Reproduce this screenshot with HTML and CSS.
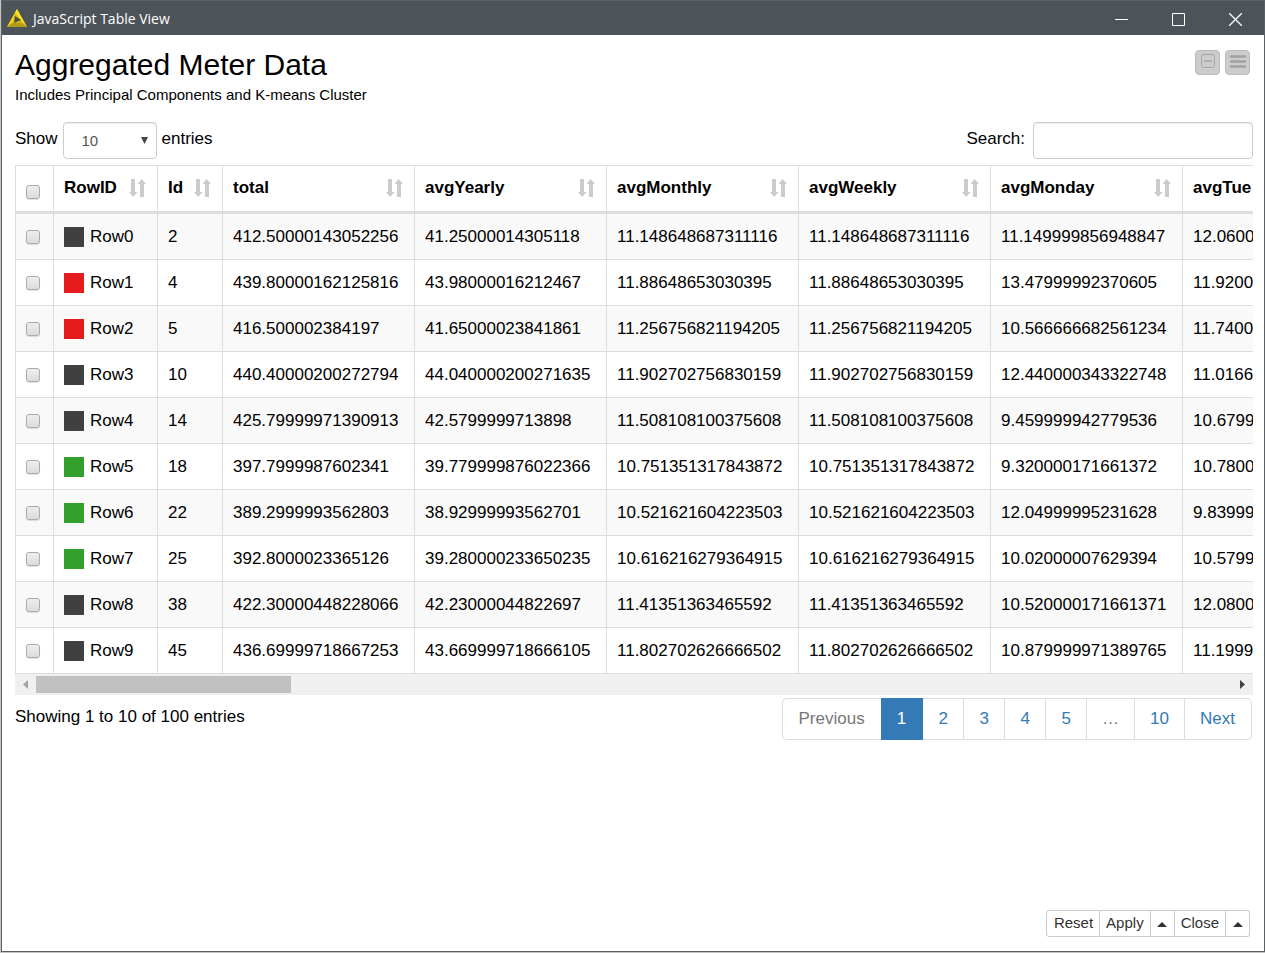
FILE: index.html
```html
<!DOCTYPE html>
<html lang="en">
<head>
<meta charset="utf-8">
<title>JavaScript Table View</title>
<link rel="stylesheet" href="styles.css">
</head>
<body>
<div class="window">
  <header class="titlebar">
    <svg class="app-icon" width="20" height="18" viewBox="0 0 20 18" aria-hidden="true">
      <path d="M10 0L20 18H0Z" fill="#d8bb12"/>
      <path d="M10 0L20 18L14 11L8 3.5Z" fill="#fbe420"/>
      <path d="M8 3.5L7 9L6 14L0 18Z" fill="#f0d41c"/>
      <path d="M0 18L5 14H14L20 18Z" fill="#b39a18"/>
      <path d="M8 7L14 11L7 14Z" fill="#4c5040"/>
    </svg>
    <span class="titlebar-text">JavaScript Table View</span>
    <div class="window-buttons">
      <button class="window-button" aria-label="Minimize"><svg width="13" height="13" viewBox="0 0 13 13"><path d="M0 6.5H13"/></svg></button>
      <button class="window-button" aria-label="Maximize"><svg width="13" height="13" viewBox="0 0 13 13"><path d="M.5 .5H12.5V12.5H.5Z"/></svg></button>
      <button class="window-button" aria-label="Close window"><svg width="13" height="13" viewBox="0 0 13 13"><path d="M0 0L13 13M13 0L0 13" stroke-width="1.3"/></svg></button>
    </div>
  </header>
  <main class="view">
    <div class="heading">
      <div>
        <h1 class="title">Aggregated Meter Data</h1>
        <p class="subtitle">Includes Principal Components and K-means Cluster</p>
      </div>
      <div class="tools">
        <button class="tool" aria-label="Collapse"><svg width="23" height="23" viewBox="0 0 23 23" fill="none" stroke="#a5a5a5"><rect x="5.5" y="3.5" width="13" height="13" rx="2"/><path d="M8 10H16" stroke-width="1.5"/></svg></button>
        <button class="tool" aria-label="Menu"><svg width="23" height="23" viewBox="0 0 23 23" stroke="#a1a1a1" stroke-width="2.6" stroke-linecap="round"><path d="M5 5.5H19M5 10.5H19M5 15.5H19"/></svg></button>
      </div>
    </div>
    <div class="filters">
      <label class="length">Show
        <span class="select-wrap"><select class="field length-select"><option>10</option></select><svg class="select-arrow" width="7" height="7" viewBox="0 0 7 7"><path d="M0 0H7L3.5 7Z" fill="#444"/></svg></span>
        entries</label>
      <label class="search">Search: <input class="field search-input" type="search"></label>
    </div>
    <div class="table-scroll">
      <table class="data">
        <colgroup><col class="col-check"><col class="col-row"><col class="col-id"><col class="col-value" span="6"></colgroup>
        <thead><tr id="columns"><th class="check-head"><input class="check" type="checkbox" aria-label="Select all rows"></th></tr></thead>
        <tbody id="rows"></tbody>
      </table>
    </div>
    <div class="scrollbar">
      <button class="scroll-button" aria-label="Scroll left"><svg width="5" height="9" viewBox="0 0 5 9"><path d="M5 0V9L0 4.5Z" fill="#a3a3a3"/></svg></button>
      <div class="track"><div class="thumb"></div></div>
      <button class="scroll-button" aria-label="Scroll right"><svg width="5" height="9" viewBox="0 0 5 9"><path d="M0 0V9L5 4.5Z" fill="#444"/></svg></button>
    </div>
    <div class="summary">
      <div class="info">Showing 1 to 10 of 100 entries</div>
      <nav class="pages" aria-label="Pages">
        <a class="page muted">Previous</a><a class="page active" href="#">1</a><a class="page" href="#">2</a><a class="page" href="#">3</a><a class="page" href="#">4</a><a class="page" href="#">5</a><a class="page muted">…</a><a class="page" href="#">10</a><a class="page" href="#">Next</a>
      </nav>
    </div>
    <footer class="actions">
      <button class="action">Reset</button><button class="action">Apply</button><button class="action caret" aria-label="Apply options"><svg width="10" height="5" viewBox="0 0 10 5"><path d="M0 5L5 0L10 5Z" fill="#333"/></svg></button><button class="action">Close</button><button class="action caret" aria-label="Close options"><svg width="10" height="5" viewBox="0 0 10 5"><path d="M0 5L5 0L10 5Z" fill="#333"/></svg></button>
    </footer>
  </main>
</div>
<script src="table.js"></script>
</body>
</html>
```

FILE: styles.css
```css
* { box-sizing: border-box; }

body {
  margin: 0;
  background: #c4c4c4;
  color: #000;
  font: 17px/24px "Liberation Sans", Arial, sans-serif;
}

button, input, select { font: inherit; margin: 0; }

.window {
  display: flex;
  flex-direction: column;
  min-height: calc(100vh - 1px);
  margin: 0 0 1px 1px;
  border: 1px solid #5a6063;
  border-top-color: #596268;
  background: #fff;
}

.titlebar {
  display: flex;
  align-items: center;
  height: 34px;
  padding-left: 5px;
  gap: 6px;
  background: #4c5359;
  color: #fff;
}

.titlebar-text {
  padding-top: 2px;
  font: 14px/20px "Open Sans", "Noto Sans", sans-serif;
}

.window-buttons { display: flex; margin-left: auto; }

.window-button {
  display: flex;
  align-items: center;
  justify-content: center;
  width: 57px;
  height: 34px;
  padding: 2px 0 0;
  border: 0;
  background: none;
}

.window-button path { fill: none; stroke: #fff; }

.view {
  display: flex;
  flex: 1;
  flex-direction: column;
  padding: 10px 11px 14px 13px;
}

.heading { display: flex; justify-content: space-between; height: 77px; }

.title { margin: 0; font-size: 30px; font-weight: 400; line-height: 40px; }

.subtitle { margin: 0; font-size: 15px; line-height: 20px; }

.tools { display: flex; gap: 5px; padding: 5px 3px 0 0; }

.tool {
  width: 25px;
  height: 25px;
  padding: 0;
  border: 1px solid #bbb;
  border-radius: 4px;
  background: #ccc;
}

.tool svg { display: block; }

.filters { display: flex; justify-content: space-between; height: 43px; }

.length, .search { display: flex; gap: 5px; line-height: 34px; }

.search { gap: 8px; }

.field {
  height: 37px;
  border: 1px solid #ccc;
  border-radius: 4px;
  background: #fff;
  box-shadow: inset 0 1px 1px rgba(0, 0, 0, .07);
  color: #555;
  font-size: 15px;
}

.select-wrap { display: flex; position: relative; }

.length-select { appearance: none; width: 94px; padding: 0 18px; }

.select-arrow { position: absolute; right: 9px; top: 15px; }

.search-input { width: 220px; padding: 6px 12px; }

.table-scroll { overflow: hidden; }

.data {
  width: 1360px;
  border-top: 1px solid #ddd;
  border-left: 1px solid #ddd;
  border-spacing: 0;
  table-layout: fixed;
}

.col-check { width: 38px; }
.col-row { width: 104px; }
.col-id { width: 65px; }
.col-value { width: 192px; }

.data th, .data td {
  height: 46px;
  padding: 0 10px;
  border-right: 1px solid #ddd;
  border-bottom: 1px solid #ddd;
  text-align: left;
  white-space: nowrap;
}

.data th {
  height: 48px;
  padding-bottom: 2px;
  border-bottom-width: 3px;
}

.data tbody tr:nth-child(odd) { background: #f9f9f9; }

.column { display: flex; align-items: center; justify-content: space-between; }

.row-id { display: flex; align-items: center; gap: 6px; }

.swatch { width: 20px; height: 20px; }
.dark { background: #404040; }
.red { background: #e41a1c; }
.green { background: #33a02c; }

.check {
  appearance: none;
  display: block;
  width: 14px;
  height: 14px;
  border: 1px solid #aaa;
  border-radius: 3px;
  background: linear-gradient(#eee, #dcdcdc);
  box-shadow: 0 1px 1px rgba(0, 0, 0, .12);
}

.data .check-head { padding-top: 9px; }

.scrollbar { display: flex; height: 21px; padding: 2px 0; background: #f0f0f0; }

.scroll-button {
  display: flex;
  align-items: center;
  justify-content: center;
  width: 21px;
  padding: 0;
  border: 0;
  background: none;
}

.track { flex: 1; }

.thumb { width: 255px; height: 17px; background: #c1c1c1; }

.summary { display: flex; justify-content: space-between; margin-top: 3px; }

.info { padding-top: 7px; }

.pages { display: flex; margin-right: 1px; }

.page {
  min-width: 41px;
  padding: 8px 15px;
  border: 1px solid #ddd;
  border-left-width: 0;
  color: #337ab7;
  text-align: center;
  text-decoration: none;
}

.page:first-child {
  padding: 8px 16px;
  border-left-width: 1px;
  border-right-width: 0;
  border-radius: 5px 0 0 5px;
}

.page:last-child { padding: 8px 16px 8px 15px; border-radius: 0 5px 5px 0; }
.muted { color: #777; }
.active { padding: 8px 16px; border-color: #337ab7; background: #337ab7; color: #fff; }

.actions { display: flex; justify-content: flex-end; margin: auto 3px 0 0; }

.action {
  height: 27px;
  padding: 0 6px 2px;
  border: 1px solid #ccc;
  border-left-width: 0;
  background: #fff;
  color: #333;
  font-size: 15px;
  line-height: 23px;
}

.action:first-child { padding-left: 7px; border-left-width: 1px; border-radius: 3px 0 0 3px; }
.action:last-child { border-radius: 0 3px 3px 0; }

.caret {
  display: flex;
  align-items: center;
  justify-content: center;
  width: 24px;
  padding-top: 4px;
}
```

FILE: table.js
```javascript
const columns = ["RowID", "Id", "total", "avgYearly", "avgMonthly", "avgWeekly", "avgMonday", "avgTue"];

const rows = [
  ["dark", "2", "412.50000143052256", "41.25000014305118", "11.148648687311116", "11.148648687311116", "11.149999856948847", "12.0600"],
  ["red", "4", "439.80000162125816", "43.98000016212467", "11.88648653030395", "11.88648653030395", "13.47999992370605", "11.9200"],
  ["red", "5", "416.500002384197", "41.65000023841861", "11.256756821194205", "11.256756821194205", "10.566666682561234", "11.7400"],
  ["dark", "10", "440.40000200272794", "44.040000200271635", "11.902702756830159", "11.902702756830159", "12.440000343322748", "11.0166"],
  ["dark", "14", "425.79999971390913", "42.5799999713898", "11.508108100375608", "11.508108100375608", "9.459999942779536", "10.6799"],
  ["green", "18", "397.7999987602341", "39.779999876022366", "10.751351317843872", "10.751351317843872", "9.320000171661372", "10.7800"],
  ["green", "22", "389.2999993562803", "38.92999993562701", "10.521621604223503", "10.521621604223503", "12.04999995231628", "9.83999"],
  ["green", "25", "392.8000023365126", "39.280000233650235", "10.616216279364915", "10.616216279364915", "10.02000007629394", "10.5799"],
  ["dark", "38", "422.30000448228066", "42.23000044822697", "11.41351363465592", "11.41351363465592", "10.520000171661371", "12.0800"],
  ["dark", "45", "436.69999718667253", "43.669999718666105", "11.802702626666502", "11.802702626666502", "10.879999971389765", "11.1999"]
];

const sortIcon = '<svg width="18" height="18" viewBox="0 0 18 18" fill="#ccc" aria-hidden="true"><path d="M2 0H6V13H8.5L4.2 18L0 13H2ZM11 18V5H8.5L12.8 0L17 5H15V18Z"/></svg>';

document.getElementById("columns").insertAdjacentHTML("beforeend", columns.map(name =>
  `<th><div class="column">${name}${sortIcon}</div></th>`).join(""));

document.getElementById("rows").innerHTML = rows.map(([color, ...values], i) =>
  `<tr><td><input class="check" type="checkbox" aria-label="Select Row${i}"></td>` +
  `<td><div class="row-id"><span class="swatch ${color}"></span>Row${i}</div></td>` +
  values.map(value => `<td>${value}</td>`).join("") + "</tr>").join("");
```
